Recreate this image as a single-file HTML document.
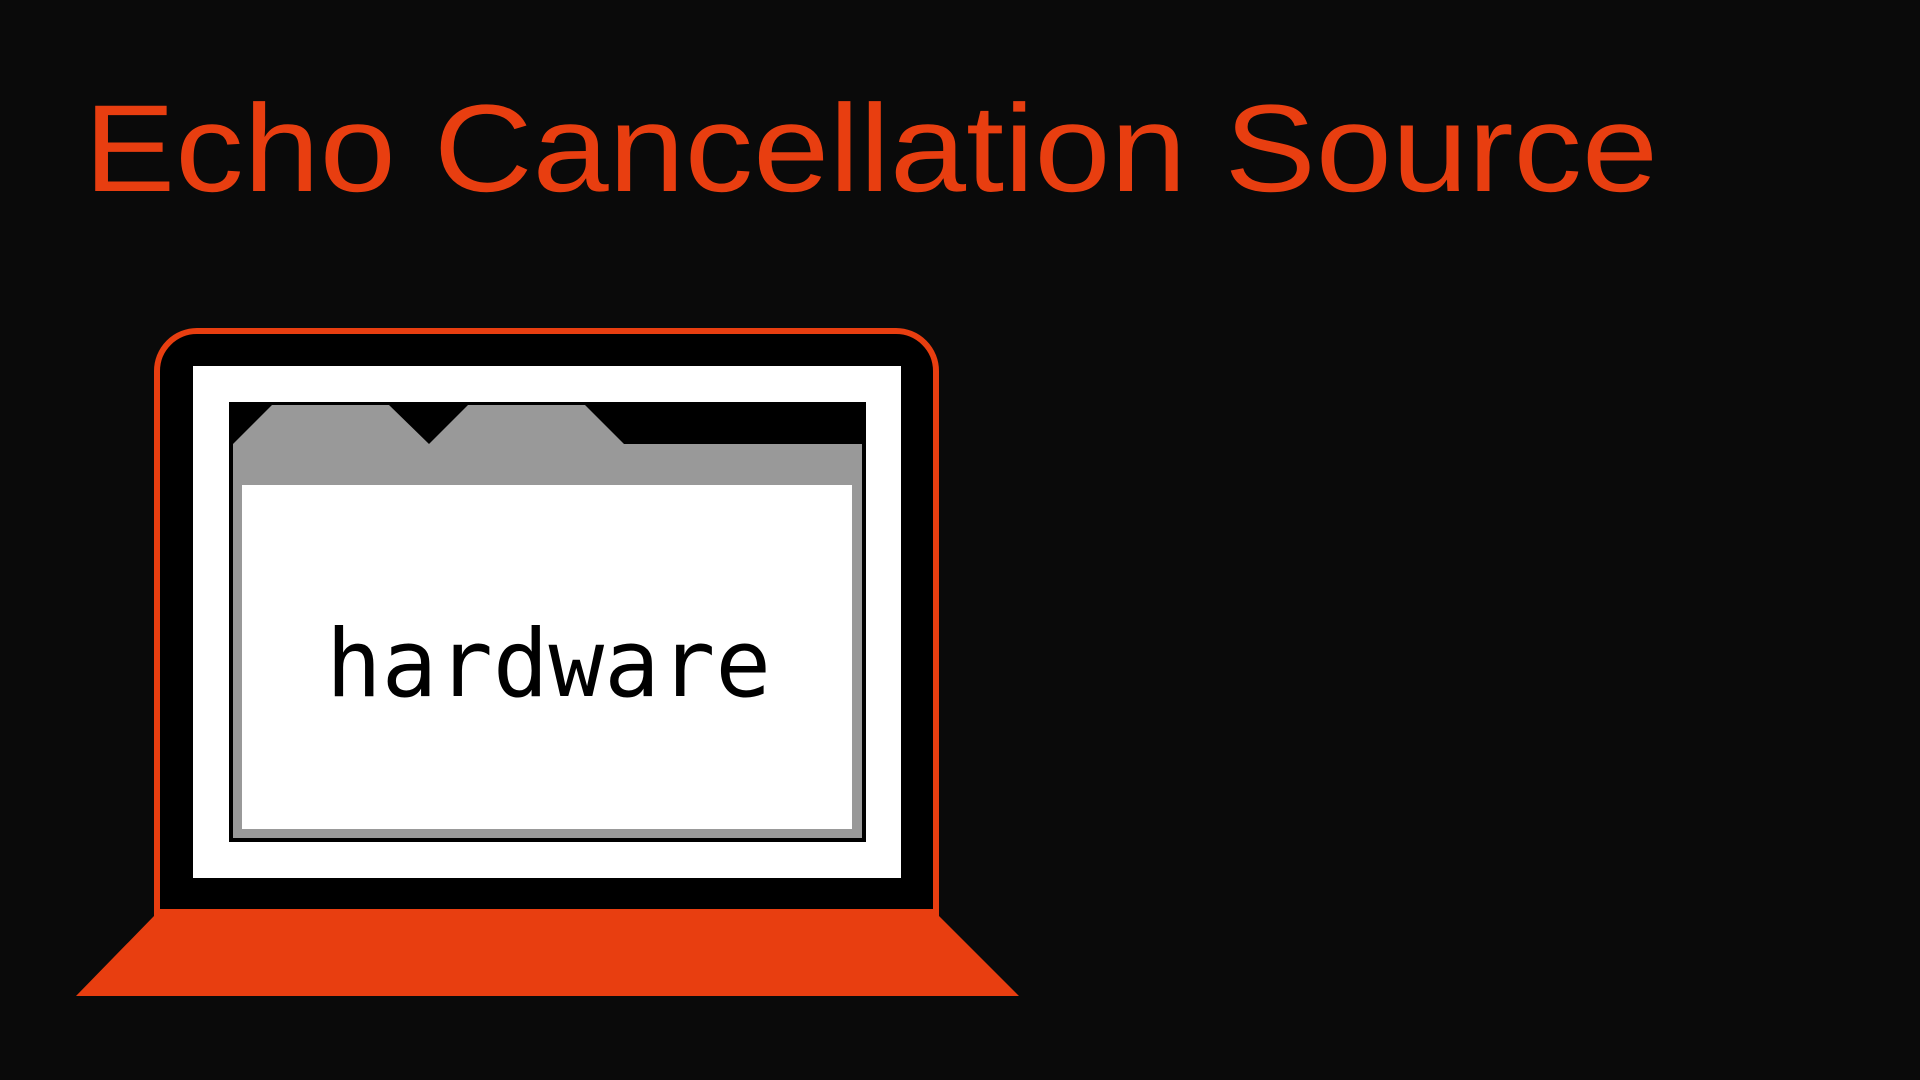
<!DOCTYPE html>
<html><head><meta charset="utf-8"><style>
html,body{margin:0;padding:0;background:#0a0a0a;width:1920px;height:1080px;overflow:hidden}
</style></head><body>
<svg width="1920" height="1080" viewBox="0 0 1920 1080" xmlns="http://www.w3.org/2000/svg">
<rect width="1920" height="1080" fill="#0a0a0a"/>
<text x="84" y="191" font-family="Liberation Sans, sans-serif" font-size="124" fill="#e83e10" textLength="1574" lengthAdjust="spacingAndGlyphs">Echo Cancellation Source</text>
<!-- laptop lid -->
<path d="M157,915 L157,371 A40,40 0 0 1 197,331 L896,331 A40,40 0 0 1 936,371 L936,915" fill="#000" stroke="#e83e10" stroke-width="6"/>
<!-- base -->
<polygon points="154,909 939,909 939,916 1019,996 76,996 154,916" fill="#e83e10"/>
<!-- screen -->
<rect x="193" y="366" width="708" height="512" fill="#fff"/>
<!-- window -->
<rect x="229" y="402" width="637" height="440" fill="#000"/>
<polygon points="233,444 272,405 389,405 429,444 468,405 585,405 624,444 862,444 862,838 233,838" fill="#999"/>
<rect x="242" y="485" width="610" height="344" fill="#fff"/>
<text x="326" y="696" font-family="DejaVu Sans Mono, monospace" font-size="94" fill="#000" textLength="445" lengthAdjust="spacingAndGlyphs">hardware</text>
</svg>
</body></html>
